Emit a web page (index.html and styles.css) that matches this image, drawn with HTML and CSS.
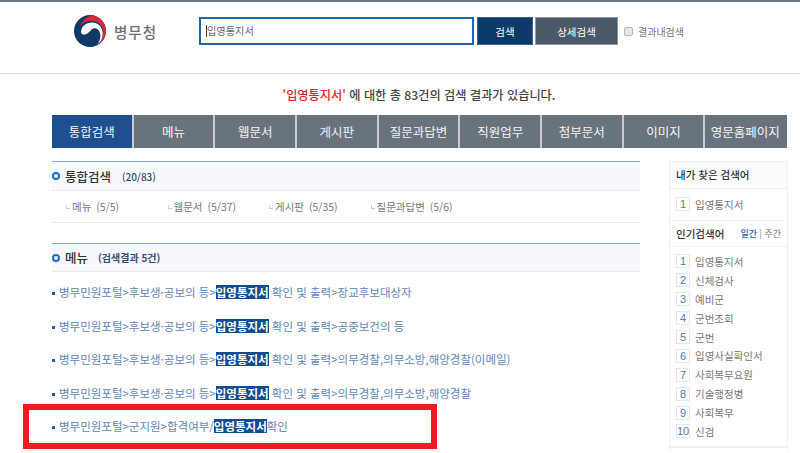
FILE: index.html
```html
<!DOCTYPE html>
<html lang="ko">
<head>
<meta charset="utf-8">
<title>병무청 통합검색</title>
<link rel="stylesheet" href="styles.css">
</head>
<body>
<header class="header">
  <div class="logo">
    <svg class="emblem" width="34" height="34" viewBox="0 0 34 34">
      <circle cx="17" cy="17" r="16" fill="#0f3a66"/>
      <path d="M7 13 C9 6 15 1.500 20 1.300 C28 3 33 10 33 17 C33 23 29.500 28 25 31 C29 26 31 21 30 16 C29 10 24 7 18 7 C13 7 9 9 7 13Z" fill="#d9273e"/>
      <path d="M8 19 C8 12 13 8.500 19 8.500 C26 8.500 30 14 29.700 20 C29.500 25 27.500 28 25 30 C27 26 28 22 27 19 C26 15 22 13 19 15 C17 17 15 20 12 20.500 C10 21 9 20 8 19Z" fill="#fff"/>
    </svg>
    <span class="logo-text">병무청</span>
  </div>
  <form class="search">
    <div class="search-input"><span class="caret"></span>입영통지서</div>
    <button class="btn btn-primary" type="button">검색</button>
    <button class="btn btn-detail" type="button">상세검색</button>
    <label class="within"><input type="checkbox" class="within-check">결과내검색</label>
  </form>
</header>

<p class="summary"><strong class="keyword">'입영통지서'</strong> 에 대한 총 83건의 검색 결과가 있습니다.</p>

<nav class="tabs">
  <a class="tab tab-active">통합검색</a>
  <a class="tab">메뉴</a>
  <a class="tab">웹문서</a>
  <a class="tab">게시판</a>
  <a class="tab">질문과답변</a>
  <a class="tab">직원업무</a>
  <a class="tab">첨부문서</a>
  <a class="tab">이미지</a>
  <a class="tab">영문홈페이지</a>
</nav>

<div class="content">
  <main class="main">
    <section class="section">
      <h2 class="section-head"><span class="ring"></span>통합검색<span class="count">(20/83)</span></h2>
      <ul class="subs">
        <li class="sub">메뉴 (5/5)</li>
        <li class="sub">웹문서 (5/37)</li>
        <li class="sub">게시판 (5/35)</li>
        <li class="sub">질문과답변 (5/6)</li>
      </ul>
    </section>
    <section class="section section-menu">
      <h2 class="section-head"><span class="ring"></span>메뉴<span class="count count-bold">(검색결과 5건)</span></h2>
      <ul class="results">
        <li class="result">병무민원포털&gt;후보생·공보의 등&gt;<mark class="hit">입영통지서</mark> 확인 및 출력&gt;장교후보대상자</li>
        <li class="result">병무민원포털&gt;후보생·공보의 등&gt;<mark class="hit">입영통지서</mark> 확인 및 출력&gt;공중보건의 등</li>
        <li class="result">병무민원포털&gt;후보생·공보의 등&gt;<mark class="hit">입영통지서</mark> 확인 및 출력&gt;의무경찰,의무소방,해양경찰(이메일)</li>
        <li class="result">병무민원포털&gt;후보생·공보의 등&gt;<mark class="hit">입영통지서</mark> 확인 및 출력&gt;의무경찰,의무소방,해양경찰</li>
        <li class="result">병무민원포털&gt;군지원&gt;합격여부/<mark class="hit">입영통지서</mark>확인</li>
      </ul>
    </section>
    <div class="red-box"></div>
  </main>
  <aside class="side">
    <h3 class="side-head">내가 찾은 검색어</h3>
    <ol class="ranks ranks-mine">
      <li class="rank"><span class="num">1</span>입영통지서</li>
    </ol>
    <div class="side-head side-head-row">
      <h3 class="side-title">인기검색어</h3>
      <span class="period"><b class="period-on">일간</b> | 주간</span>
    </div>
    <ol class="ranks">
      <li class="rank"><span class="num">1</span>입영통지서</li>
      <li class="rank"><span class="num">2</span>신체검사</li>
      <li class="rank"><span class="num">3</span>예비군</li>
      <li class="rank"><span class="num">4</span>군번조회</li>
      <li class="rank"><span class="num">5</span>군번</li>
      <li class="rank"><span class="num">6</span>입영사실확인서</li>
      <li class="rank"><span class="num">7</span>사회복무요원</li>
      <li class="rank"><span class="num">8</span>기술행정병</li>
      <li class="rank"><span class="num">9</span>사회복무</li>
      <li class="rank"><span class="num">10</span>신검</li>
    </ol>
    <div class="side-foot"></div>
  </aside>
</div>
</body>
</html>
```
FILE: styles.css
```css
* { box-sizing: border-box; }
html, body { margin: 0; height: 453px; overflow: hidden; }
body {
  font-family: "Noto Sans CJK KR", "Noto Sans", sans-serif;
  font-size: 11px;
  color: #555;
  background: #fff;
  border-top: 2px solid #6b7680;
}
h2, h3, p, ul, ol { margin: 0; padding: 0; list-style: none; font-weight: normal; }

.header {
  height: 72px;
  border-bottom: 1px solid #ddd;
  display: flex;
  align-items: flex-start;
  padding: 12px 0 0 73px;
}
.logo { width: 126px; display: flex; align-items: center; gap: 7px; height: 34px; }
.emblem { flex: none; }
.logo-text { font-size: 14.500px; font-weight: 500; color: #6a7076; letter-spacing: 1px; }
.search { display: flex; align-items: center; height: 28px; margin-top: 3px; }
.search-input {
  width: 275px; height: 28px;
  border: 2px solid #1c66b0;
  padding-left: 5px;
  line-height: 24px;
  font-size: 10.200px;
  color: #666;
  display: flex;
  align-items: center;
}
.caret { width: 1px; height: 12px; background: #333; }
.btn { height: 28px; border: 1px solid #8b99a6; color: #fff; font: inherit; font-size: 10.500px; padding: 0; }
.btn-primary { width: 56px; margin-left: 3px; background: #0b3a68; border-color: #3f6488; }
.btn-detail { width: 83px; margin-left: 2px; background: #4a5867; }
.within { display: flex; align-items: center; margin-left: 6px; font-size: 10px; color: #777; }
.within-check {
  appearance: none;
  width: 9px; height: 9px;
  margin: 0 5px 0 0;
  border: 1px solid #b5b5b5;
  border-radius: 2px;
  background: #e6e6e6;
}

.summary {
  text-align: center;
  margin: 12px 0 0;
  height: 29px;
  line-height: 18px;
  font-size: 12.200px;
  font-weight: 500;
  color: #444;
  padding-left: 38px;
}
.keyword { color: #e0252b; font-weight: 500; }

.tabs { display: flex; margin-left: 52px; width: 735px; height: 33px; }
.tab {
  flex: 1;
  background: #69737c;
  color: #f3f4f5;
  border-right: 2px solid #c9cdd1;
  font-size: 12.500px;
  line-height: 33px;
  text-align: center;
}
.tab:last-child { border-right-color: transparent; }
.tab-active { background: #1f4f8f; }

.content { display: flex; margin: 13px 0 0 52px; }
.main { width: 588px; position: relative; }
.section-head {
  height: 30px;
  border-top: 1px solid #7ba6d1;
  border-bottom: 1px solid #e7e9ec;
  background: #f6f8fc;
  display: flex;
  align-items: center;
  font-size: 12.500px;
  font-weight: 500;
  color: #333;
}
.ring {
  width: 8px; height: 8px;
  border: 2px solid #1c68c4;
  border-radius: 50%;
  background: #fff;
  margin-right: 5px;
}
.count { margin-left: 11px; font-size: 10px; color: #33506e; font-weight: 500; }
.count-bold { margin-left: 10px; font-weight: 700; }
.subs {
  display: flex;
  height: 32px;
  align-items: center;
  border-bottom: 1px solid #e4e6e9;
  padding-left: 13px;
}
.sub { width: 101.500px; color: #777; font-size: 10.500px; word-spacing: 2px; padding-left: 7px; position: relative; }
.sub::before {
  content: "";
  position: absolute; left: 1px; top: 6px;
  width: 3px; height: 3px;
  border-left: 1px solid #ccc;
  border-bottom: 1px solid #ccc;
}
.section-menu { margin-top: 20px; }
.section-menu .section-head { height: 29px; }
.results { padding-top: 4px; }
.result {
  height: 33.500px;
  line-height: 33px;
  font-size: 11.500px;
  color: #5f86b2;
  padding-left: 7px;
  position: relative;
  white-space: nowrap;
}
.result::before {
  content: "";
  position: absolute; left: 0; top: 16px;
  width: 3px; height: 3px;
  background: #2a5f9e;
}
.hit {
  display: inline-block;
  height: 14px;
  line-height: 14px;
  background: #0f4c92;
  color: #fff;
  font-weight: 700;
}
.red-box {
  position: absolute;
  left: -29px; top: 243px;
  width: 414px; height: 45px;
  border: 6px solid #ed1c24;
}

.side { width: 119px; margin-left: 29px; border: 1px solid #eef0f2; border-bottom: 0; height: 290px; }
.side-head {
  height: 27px;
  background: #fafbfb;
  border-bottom: 1px solid #eef0f2;
  padding-left: 6px;
  font-size: 10.500px;
  font-weight: 500;
  color: #333;
  line-height: 26px;
}
.side-head-row {
  display: flex;
  justify-content: space-between;
  background: #fff;
  padding-right: 6px;
  border-top: 1px solid #eef0f2;
}
.side-title { font-size: inherit; font-weight: 500; }
.period { font-size: 9px; color: #777; font-weight: 400; }
.period-on { color: #2a5f9e; font-weight: 500; }
.ranks { padding: 5px 0 0 6px; }
.ranks-mine { height: 31px; padding-top: 6px; }
.rank { display: flex; align-items: center; height: 18.900px; font-size: 10.500px; color: #777; white-space: nowrap; }
.num {
  width: 14px; height: 14px;
  border: 1px solid #e2e8f2;
  margin-right: 5px;
  display: flex; align-items: center; justify-content: center;
  color: #5a78a5;
  font-size: 11px;
  font-family: "Liberation Sans", sans-serif;
}
.side-foot { height: 2px; margin-top: 5px; background: #f1f2f4; }
```
